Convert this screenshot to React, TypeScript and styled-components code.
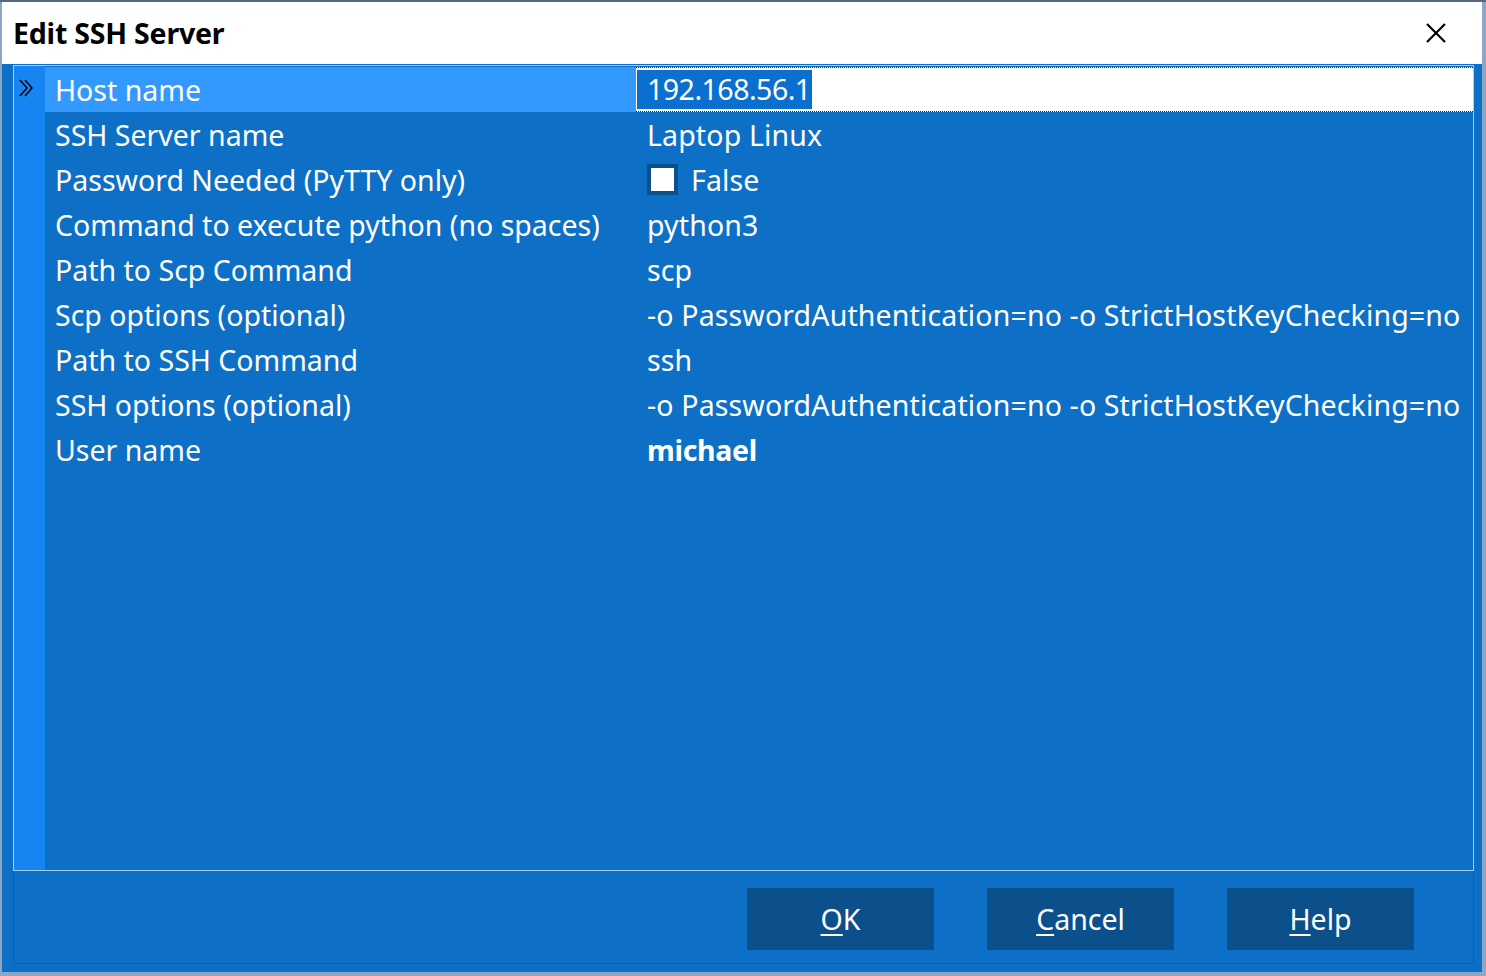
import React from "react";
import styled, { createGlobalStyle } from "styled-components";

const Global = createGlobalStyle`
  html, body { margin: 0; padding: 0; background: #8ea6c6; }
  body { font-family: "Noto Sans", "Open Sans", sans-serif; }
  * { box-sizing: border-box; }
`;

const Window = styled.div`
  width: 1486px;
  height: 976px;
  display: flex;
  flex-direction: column;
  background: #8ea6c6;
  border-top: 2px solid #55667e;
  padding: 0 4px 4px 2px;
`;

const TitleBar = styled.div`
  height: 62px;
  flex: none;
  background: #ffffff;
  display: flex;
  align-items: center;
  justify-content: space-between;
  padding: 0 36px 0 11px;
`;

const Title = styled.div`
  font-family: "Noto Sans", sans-serif;
  font-weight: 700;
  font-size: 28.5px;
  color: #000;
  letter-spacing: -0.2px;
`;

const Body = styled.div`
  flex: 1;
  background: #0d6fc6;
  display: flex;
  flex-direction: column;
  padding: 1px 8px 8px 11px;
`;

const Grid = styled.div`
  flex: 1;
  display: flex;
  border: 1px solid #9fd1ff;
  background: #0d6fc6;
`;

const HeaderColumn = styled.div`
  width: 31px;
  flex: none;
  background: #1685f1;
  padding-top: 1px;
`;

const HeaderCell = styled.div`
  height: 45px;
  display: flex;
  align-items: center;
  padding-left: 5px;
  padding-bottom: 4px;
`;

const Rows = styled.div`
  flex: 1;
  display: flex;
  flex-direction: column;
  padding-top: 1px;
`;

const Row = styled.div`
  height: 45px;
  display: flex;
`;

const LabelCell = styled.div<{ $selected?: boolean }>`
  width: 591px;
  flex: none;
  display: flex;
  align-items: center;
  padding-left: 10px;
  background: ${(p) => (p.$selected ? "#3499fe" : "transparent")};
  color: #ffffff;
  font-size: 28.5px;
  white-space: nowrap;
`;

const ValueCell = styled.div<{ $bold?: boolean }>`
  flex: 1;
  display: flex;
  align-items: center;
  padding-left: 11px;
  color: #ffffff;
  font-size: 28.5px;
  font-weight: ${(p) => (p.$bold ? 700 : 400)};
  white-space: nowrap;
  letter-spacing: ${(p) => (p.$bold ? "-0.3px" : "0.14px")};
`;

const EditorCell = styled.div`
  flex: 1;
  display: flex;
  align-items: center;
  background: #ffffff;
  border-top: 1px dotted #223;
  border-bottom: 1px dotted #223;
  padding-left: 1px;
`;

const SelectedText = styled.span`
  background: #0a6fcf;
  color: #ffffff;
  font-size: 28.5px;
  padding: 2px 1px 2px 10px;
  line-height: 35px;
  letter-spacing: -0.5px;
`;

const Check = styled.span`
  width: 31px;
  height: 31px;
  border: 4px solid #0b4f8c;
  background: #ffffff;
  margin-right: 13px;
  flex: none;
`;

const Footer = styled.div`
  height: 93px;
  flex: none;
  display: flex;
  align-items: center;
  justify-content: flex-end;
  gap: 53px;
  padding-right: 59px;
  padding-top: 3px;
  border-left: 1px solid #0a60b4;
  border-right: 1px solid #0a60b4;
  border-bottom: 1px solid #0a60b4;
`;

const Button = styled.button`
  width: 187px;
  height: 62px;
  border: none;
  background: #0b4f8b;
  color: #ffffff;
  font-family: "Noto Sans", sans-serif;
  font-size: 28.5px;
  padding: 0;
  cursor: pointer;
  u { text-decoration-thickness: 2px; text-underline-offset: 4px; }
`;

const rows: { label: string; value: React.ReactNode; bold?: boolean }[] = [
  { label: "SSH Server name", value: "Laptop Linux" },
  { label: "Password Needed (PyTTY only)", value: "checkbox" },
  { label: "Command to execute python (no spaces)", value: "python3" },
  { label: "Path to Scp Command", value: "scp" },
  { label: "Scp options (optional)", value: "-o PasswordAuthentication=no -o StrictHostKeyChecking=no" },
  { label: "Path to SSH Command", value: "ssh" },
  { label: "SSH options (optional)", value: "-o PasswordAuthentication=no -o StrictHostKeyChecking=no" },
  { label: "User name", value: "michael", bold: true },
];

export default function App() {
  return (
    <>
      <Global />
      <Window>
        <TitleBar>
          <Title>Edit SSH Server</Title>
          <svg width="20" height="20" viewBox="0 0 20 20">
            <path d="M1 1 L19 19 M19 1 L1 19" stroke="#000" strokeWidth="2.2" fill="none" />
          </svg>
        </TitleBar>
        <Body>
          <Grid>
            <HeaderColumn>
              <HeaderCell>
                <svg width="15" height="18" viewBox="0 0 15 18">
                  <path d="M1 1 L8 9 L1 17 M6 1 L13 9 L6 17" stroke="#000" strokeWidth="1.4" fill="none" />
                </svg>
              </HeaderCell>
            </HeaderColumn>
            <Rows>
              <Row>
                <LabelCell $selected>Host name</LabelCell>
                <EditorCell>
                  <SelectedText>192.168.56.1</SelectedText>
                </EditorCell>
              </Row>
              {rows.map((r) => (
                <Row key={r.label}>
                  <LabelCell>{r.label}</LabelCell>
                  <ValueCell $bold={r.bold}>
                    {r.value === "checkbox" ? (
                      <>
                        <Check />
                        False
                      </>
                    ) : (
                      r.value
                    )}
                  </ValueCell>
                </Row>
              ))}
            </Rows>
          </Grid>
          <Footer>
            <Button><u>O</u>K</Button>
            <Button><u>C</u>ancel</Button>
            <Button><u>H</u>elp</Button>
          </Footer>
        </Body>
      </Window>
    </>
  );
}
